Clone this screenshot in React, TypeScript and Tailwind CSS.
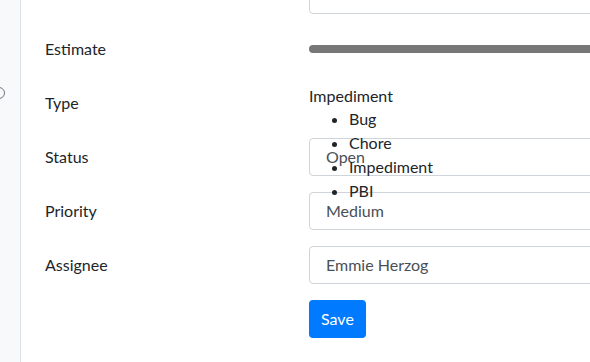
import React from 'react';

const types = ['Bug', 'Chore', 'Impediment', 'PBI'];

function Field({ label, children }: { label: string; children: React.ReactNode }) {
  return (
    <div className="flex h-[38px] mb-4 items-center">
      <div className="w-[288px] shrink-0 pl-6">{label}</div>
      <div className="flex-1 h-full">{children}</div>
    </div>
  );
}

function Input({ value }: { value: string }) {
  return (
    <div className="h-[38px] w-[420px] border border-[#ced4da] rounded-[4px] bg-white pl-4 flex items-center text-[#495057]">
      {value}
    </div>
  );
}

export default function App() {
  return (
    <div
      className="flex h-[362px] w-[590px] overflow-hidden bg-white text-[16px] text-[#212529]"
      style={{ fontFamily: 'Lato, "Noto Sans", sans-serif' }}
    >
      <aside className="relative w-[21px] shrink-0 bg-[#f8f9fa] border-r border-[#dee2e6]">
        <span className="absolute left-[-7px] top-[87px] w-[12px] h-[12px] rounded-full border-[1.5px] border-[#6c757d]" />
      </aside>
      <main className="flex-1 -mt-[24px]">
        <Field label="">
          <Input value="" />
        </Field>
        <Field label="Estimate">
          <div className="h-full flex items-center">
            <div className="h-[8px] w-[420px] rounded-full bg-[#777777]" />
          </div>
        </Field>
        <Field label="Type">
          <div className="h-full leading-6">
            <div>Impediment</div>
            <ul className="list-disc pl-10 relative z-10 -mt-px">
              {types.map((t) => (
                <li key={t}>{t}</li>
              ))}
            </ul>
          </div>
        </Field>
        <Field label="Status">
          <Input value="Open" />
        </Field>
        <Field label="Priority">
          <Input value="Medium" />
        </Field>
        <Field label="Assignee">
          <Input value="Emmie Herzog" />
        </Field>
        <div className="pl-[288px]">
          <button className="h-[38px] px-3 rounded-[4px] bg-[#007bff] text-white">Save</button>
        </div>
      </main>
    </div>
  );
}
